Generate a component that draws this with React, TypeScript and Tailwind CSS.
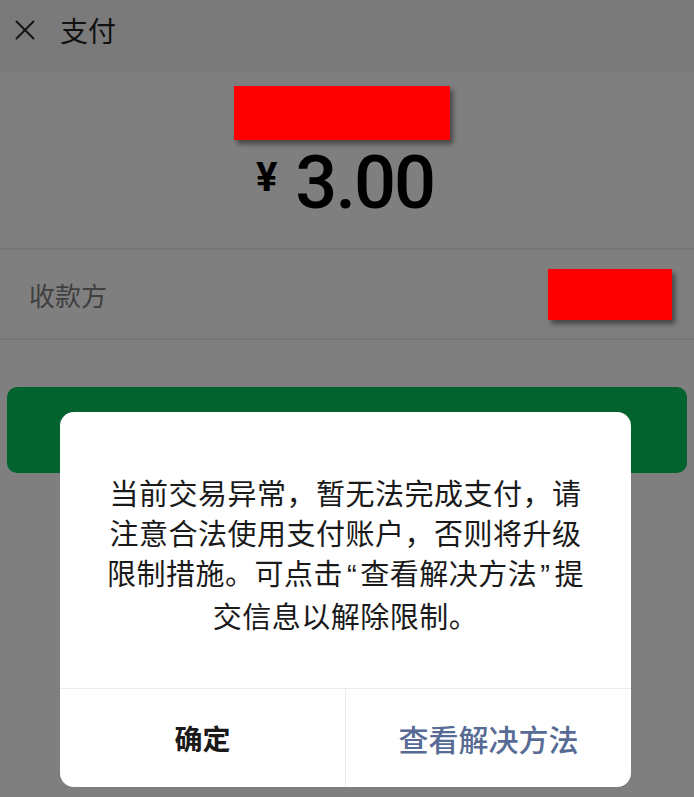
import { X } from 'lucide-react';

const cjk = { fontFamily: '"Noto Sans CJK SC", "Noto Sans", sans-serif' };
const latin = { fontFamily: '"Liberation Sans", sans-serif' };

export default function App() {
  return (
    <div className="relative h-[797px] w-[694px] overflow-hidden bg-[#7f7f7f]" style={cjk}>
      {/* Header */}
      <div className="flex h-[72px] items-center border-b border-[#787878] bg-[#7a7a7a] pb-[12px] pl-[8px]">
        <X className="h-[34px] w-[34px] text-[#111]" strokeWidth={1.3} />
        <span className="ml-[18px] text-[28px] leading-none text-[#111]">支付</span>
      </div>

      {/* Amount */}
      <div className="flex flex-col items-center pt-[14px]">
        <div className="mr-[10px] h-[54px] w-[216px] bg-[#ff0000] shadow-[3px_4px_5px_rgba(0,0,0,0.45)]" />
        <div className="mr-[4px] mt-[6px] flex items-start text-black">
          <span className="mt-[12px] text-[40px] font-bold leading-none" style={{ fontFamily: 'Roboto, sans-serif' }}>¥</span>
          <span className="ml-[18px] text-[74px] font-medium leading-none tracking-[-2px]" style={{ fontFamily: 'Roboto, sans-serif' }}>3.00</span>
        </div>
      </div>

      {/* Payee row */}
      <div className="mt-[28px] flex h-[92px] items-center justify-between border-y-2 border-[#777] px-[22px] pl-[29px]">
        <span className="text-[26px] text-[#404040]">收款方</span>
        <div className="h-[51px] w-[124px] bg-[#ff0000] shadow-[3px_4px_5px_rgba(0,0,0,0.45)]" />
      </div>

      {/* Pay button */}
      <div className="mx-[7px] mt-[47px] h-[86px] rounded-[10px] bg-[#03632f]" />

      {/* Dialog */}
      <div className="absolute left-[60px] top-[412px] w-[571px] overflow-hidden rounded-[14px] bg-white">
        <p className="pb-[53px] pt-[60px] text-center text-[29px] leading-[40px] tracking-[0.5px] text-[#1a1a1a]">
          当前交易异常，暂无法完成支付，请
          <br />
          注意合法使用支付账户，否则将升级
          <br />
          限制措施。可点击<span className="pl-[4px] pr-[3px]" style={latin}>“</span>查看解决方法<span className="pl-[3px] pr-[4px]" style={latin}>”</span>提
          <br />
          交信息以解除限制。
        </p>
        <div className="grid h-[99px] grid-cols-[286px_1fr] border-t border-[#ececec]">
          <div className="flex items-center justify-center border-r border-[#ececec] text-[28px] font-bold text-[#1a1a1a]">确定</div>
          <div className="flex items-center justify-center text-[30px] font-medium text-[#576b95]">查看解决方法</div>
        </div>
      </div>
    </div>
  );
}
